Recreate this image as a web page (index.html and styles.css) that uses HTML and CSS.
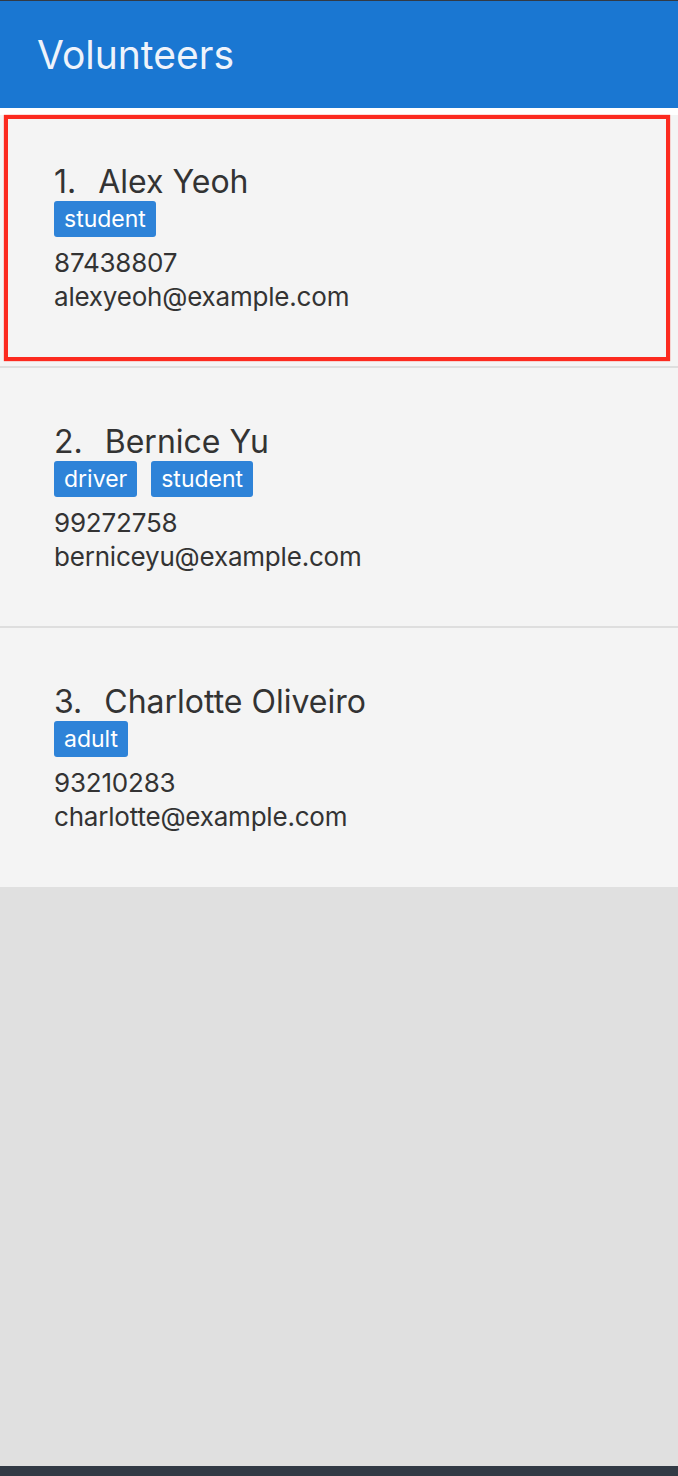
FILE: index.html
```html
<!DOCTYPE html>
<html>
<head>
<meta charset="utf-8">
<link rel="stylesheet" href="styles.css">
</head>
<body>
<div class="app">
  <div class="topline"></div>
  <header class="header"><h1 class="title">Volunteers</h1></header>
  <ul class="list">
    <li class="card selected">
      <div class="card-body">
        <div class="name"><span class="num">1.</span><span>Alex Yeoh</span></div>
        <div class="tags"><span class="tag">student</span></div>
        <div class="info">87438807</div>
        <div class="info">alexyeoh@example.com</div>
      </div>
    </li>
    <li class="card">
      <div class="card-body">
        <div class="name"><span class="num">2.</span><span>Bernice Yu</span></div>
        <div class="tags"><span class="tag">driver</span><span class="tag">student</span></div>
        <div class="info">99272758</div>
        <div class="info">berniceyu@example.com</div>
      </div>
    </li>
    <li class="card last">
      <div class="card-body">
        <div class="name"><span class="num">3.</span><span>Charlotte Oliveiro</span></div>
        <div class="tags"><span class="tag">adult</span></div>
        <div class="info">93210283</div>
        <div class="info">charlotte@example.com</div>
      </div>
    </li>
  </ul>
  <div class="filler"></div>
  <div class="bottombar"></div>
</div>
</body>
</html>
```

FILE: styles.css
```css
html, body {
  margin: 0;
  padding: 0;
  height: 100%;
}
body {
  font-family: Inter, "Noto Sans", "Liberation Sans", sans-serif;
  color: #333333;
  background: #e0e0e0;
}
.app {
  display: flex;
  flex-direction: column;
  height: 1476px;
}
.topline {
  height: 1px;
  background: #323a45;
}
.header {
  height: 107px;
  background: #1a77d2;
  display: flex;
  align-items: center;
  padding-left: 37px;
}
.title {
  margin: 0;
  font-size: 39px;
  font-weight: 400;
  color: #eef3fb;
}
.list {
  list-style: none;
  margin: 0;
  padding: 0;
}
.card {
  height: 258px;
  background: #f4f4f4;
  border-bottom: 2px solid #dedede;
}
.card.last {
  border-bottom: none;
  height: 259px;
}
.card-body {
  box-sizing: border-box;
  height: 100%;
  border: 4px solid transparent;
  padding: 51px 0 0 50px;
}
.card.selected {
  height: 246px;
  padding: 7px 8px 5px 4px;
  box-shadow: inset 0 7px 0 #ffffff;
}
.card.selected .card-body {
  border-color: #fc2a1f;
  padding: 44px 0 0 46px;
  box-shadow: 0 0 1px #fc2a1f;
}
.name {
  display: flex;
  gap: 22px;
  font-size: 32px;
  line-height: 38px;
}
.tags {
  display: flex;
  gap: 14px;
  margin-top: 0;
}
.tag {
  background: #2e83d8;
  color: #ffffff;
  font-size: 23px;
  line-height: 36px;
  padding: 0 10px;
  border-radius: 3px;
}
.tags + .info {
  margin-top: 9px;
}
.info {
  font-size: 26px;
  line-height: 34px;
  letter-spacing: -0.2px;
}
.filler {
  flex: 1;
}
.bottombar {
  height: 10px;
  background: #323a45;
}
```
